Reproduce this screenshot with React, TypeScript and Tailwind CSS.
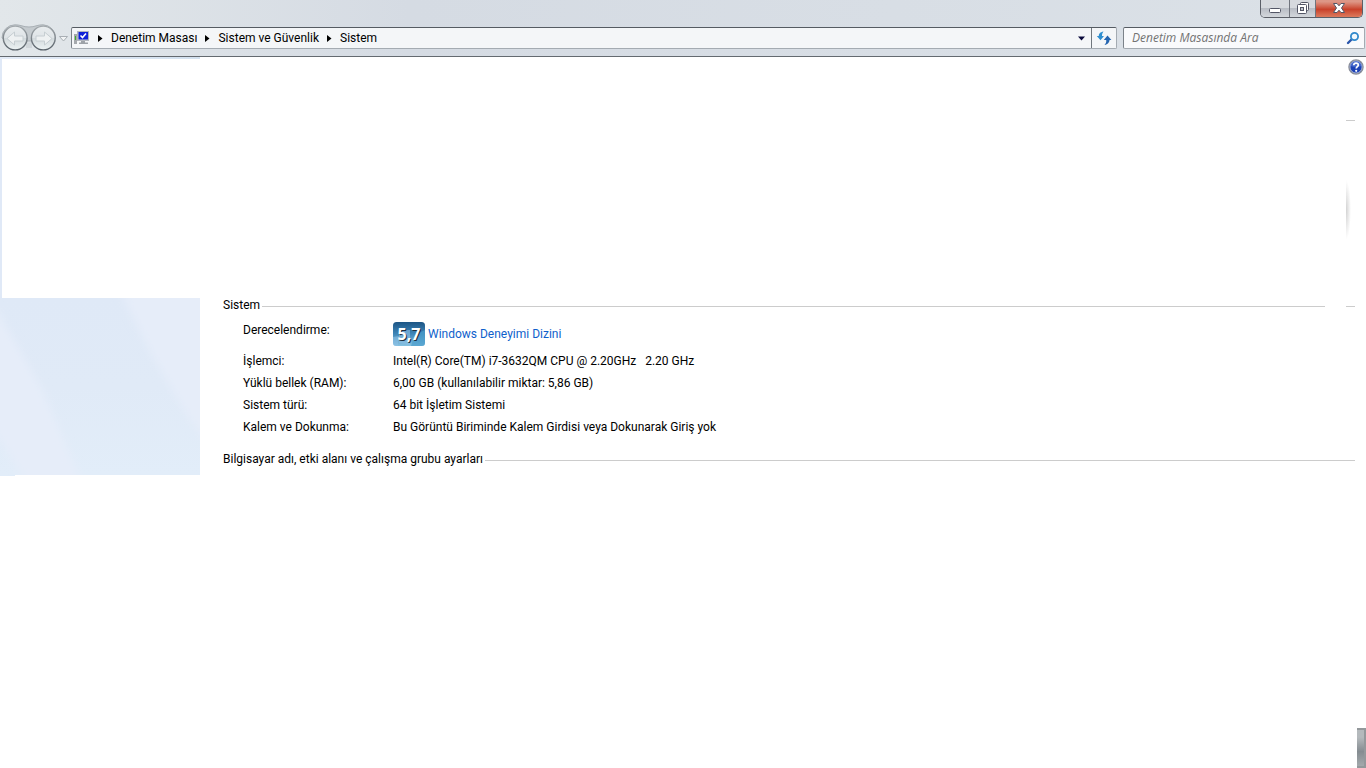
import type { ReactNode } from "react";

const crumbs = ["Denetim Masası", "Sistem ve Güvenlik", "Sistem"];

const specs = [
  { label: "İşlemci:", value: "Intel(R) Core(TM) i7-3632QM CPU @ 2.20GHz   2.20 GHz" },
  { label: "Yüklü bellek (RAM):", value: "6,00 GB (kullanılabilir miktar: 5,86 GB)" },
  { label: "Sistem türü:", value: "64 bit İşletim Sistemi" },
  {
    label: "Kalem ve Dokunma:",
    value: "Bu Görüntü Biriminde Kalem Girdisi veya Dokunarak Giriş yok",
  },
];

function NavButtons() {
  return (
    <div className="relative flex h-7 w-[70px] shrink-0 items-center">
      <svg className="absolute inset-0" width="70" height="28" viewBox="0 0 70 28" aria-hidden="true">
        <defs>
          <linearGradient id="nav-ball" x1="0" y1="0" x2="0" y2="1">
            <stop offset="0" stopColor="#e9edef" />
            <stop offset="0.48" stopColor="#dfe4e7" />
            <stop offset="0.52" stopColor="#d3dadd" />
            <stop offset="1" stopColor="#edf3f4" />
          </linearGradient>
          <linearGradient id="nav-rim" x1="0" y1="0" x2="0" y2="1">
            <stop offset="0" stopColor="#a3a9ad" />
            <stop offset="1" stopColor="#59626a" />
          </linearGradient>
        </defs>
        <path
          d="M15 .8C21 .8 23 3 29 3S37 .8 43 .8A13 13 0 0 1 55.500 14C50 18 35 17 29 17S8 18 2 14A13 13 0 0 1 15 .8Z"
          fill="#c5cbcf"
          stroke="#a9b0b5"
        />
        <path d="M26 17Q29 20 32 17V24H26Z" fill="#d0d6da" />
        <circle cx="15.2" cy="14" r="11.9" fill="url(#nav-ball)" stroke="url(#nav-rim)" strokeWidth="1.4" />
        <circle cx="43.3" cy="14" r="11.9" fill="url(#nav-ball)" stroke="url(#nav-rim)" strokeWidth="1.4" />
        <path d="M7 14.500L14.500 8V12H23V17H14.500V21Z" fill="#eef1f2" stroke="#c6ced2" />
        <path d="M52 14.500L44.500 8V12H36V17H44.500V21Z" fill="#eef1f2" stroke="#c6ced2" />
        <path d="M59.500 12.500H67.500L63.500 17Z" fill="#f2f4f5" stroke="#a9afb4" />
      </svg>
      <button type="button" aria-label="Geri" className="relative ml-0.5 size-7 rounded-full" />
      <button type="button" aria-label="İleri" className="relative size-7 rounded-full" />
      <button type="button" aria-label="Son sayfalar" className="relative h-7 w-3" />
    </div>
  );
}

function ComputerIcon() {
  return (
    <svg width="18" height="16" viewBox="0 0 18 16" aria-hidden="true">
      <rect x="1" y="4" width="3" height="10" fill="#a5a9ad" />
      <rect x="2" y="6" width="1" height="4" fill="#3fae2c" />
      <rect x="4.500" y="1.500" width="11" height="9" fill="#c9ccd2" stroke="#b3b7be" />
      <rect x="5.500" y="2" width="9.500" height="7.500" fill="#1022d8" />
      <path d="M7.500 5.500L9.500 7.500L13 3.500" fill="none" stroke="#fff" strokeWidth="1.6" />
      <path d="M8 11H12V12.500H15V14H6V12.500H8Z" fill="#9da2a8" />
    </svg>
  );
}

function WindowButtons() {
  return (
    <div className="mr-[3px] flex h-[18px] w-[103px] overflow-hidden rounded-b-[5px] border border-t-0 border-[#5b5f68]">
      <button
        type="button"
        aria-label="Simge durumuna küçült"
        className="flex flex-1 justify-center border-r border-[#70747d] bg-linear-to-b from-[#d6d9de] from-50% via-[#b9bdc5] via-50% to-[#d3d7dc]"
      >
        <svg width="14" height="16" viewBox="0 0 14 16" aria-hidden="true">
          <rect x="1.500" y="8.500" width="11" height="4" rx="1" fill="#fff" stroke="#535666" />
        </svg>
      </button>
      <button
        type="button"
        aria-label="Önceki boyut"
        className="flex w-[26px] justify-center border-r border-[#70747d] bg-linear-to-b from-[#d6d9de] from-50% via-[#b9bdc5] via-50% to-[#d3d7dc]"
      >
        <svg width="14" height="16" viewBox="0 0 14 16" aria-hidden="true">
          <rect x="4.500" y="2.500" width="8" height="8" rx="1" fill="#fff" stroke="#535666" />
          <rect x="1.500" y="4.500" width="9" height="9" rx="1" fill="#fff" stroke="#535666" />
          <rect x="4.500" y="7.500" width="3" height="3" fill="#c2c6cd" stroke="#535666" />
        </svg>
      </button>
      <button
        type="button"
        aria-label="Kapat"
        className="flex w-[46px] justify-center bg-linear-to-b from-[#dd9686] from-10% via-[#c8402a] via-55% to-[#dd7a5d]"
      >
        <svg width="14" height="16" viewBox="0 0 14 16" aria-hidden="true">
          <path
            d="M1.500 3.500H5L7 5.800L9 3.500H12.500L9.500 8L12.500 12.500H9L7 10.200L5 12.500H1.500L4.500 8Z"
            fill="#fff"
            stroke="#535666"
          />
        </svg>
      </button>
    </div>
  );
}

function AddressBar() {
  return (
    <div className="flex h-[22px] flex-1 rounded-[2px] border border-[#a4abb2] border-t-[#555b62] border-l-[#7b8289] bg-[#f4f6f8]">
      <nav aria-label="Adres" className="flex flex-1 items-center pl-px">
        <ComputerIcon />
        <ol className="ml-[3px] flex items-center">
          {crumbs.map((crumb) => (
            <li key={crumb} className="flex items-center">
              <svg width="15" height="9" viewBox="0 0 15 9" className="mr-0.5" aria-hidden="true">
                <path d="M4 1L8.500 4.500L4 8Z" fill="#000" />
              </svg>
              <a href="#" className="mr-1">
                {crumb}
              </a>
            </li>
          ))}
        </ol>
      </nav>
      <button type="button" aria-label="Önceki konumlar" className="flex w-5 items-center justify-center">
        <svg width="9" height="5" viewBox="0 0 9 5" aria-hidden="true">
          <path d="M1 0.500H8L4.500 4.500Z" fill="#0a0a3c" />
        </svg>
      </button>
      <button
        type="button"
        aria-label="Yenile"
        className="flex w-[25px] items-center justify-center border-l border-[#70777e]"
      >
        <svg width="16" height="16" viewBox="0 0 16 16" aria-hidden="true">
          <path d="M7.500 1.500C4 2 2.800 4 2.800 6H0.800L4.500 10.300L8 6H6C5.900 4.500 6.300 3 7.500 1.500Z" fill="#2f8fd0" />
          <path d="M8.500 15C12 14.500 13.500 12 13.500 10H15.400L11.500 5.500L7.800 10H10.200C10.400 12 10 13.500 8.500 15Z" fill="#2565b0" />
        </svg>
      </button>
    </div>
  );
}

function SearchBox() {
  return (
    <div className="flex h-[22px] w-[242px] items-center rounded-[2px] border border-[#a4abb2] border-t-[#555b62] border-l-[#7b8289] bg-[#f9fafc] pr-1 pl-2">
      <input
        type="search"
        aria-label="Denetim Masasında Ara"
        placeholder="Denetim Masasında Ara"
        className="min-w-0 flex-1 bg-transparent font-['Open_Sans',sans-serif] outline-none placeholder:text-[#737373] placeholder:italic"
      />
      <button type="button" aria-label="Ara">
        <svg width="14" height="14" viewBox="0 0 14 14" aria-hidden="true">
          <path d="M2 12L6 8" stroke="#2a55ab" strokeWidth="2.4" strokeLinecap="round" />
          <circle cx="8.500" cy="5.500" r="3.600" fill="#f2f8fd" stroke="#3089cc" strokeWidth="1.8" />
        </svg>
      </button>
    </div>
  );
}

function SidePanel() {
  return (
    <svg
      className="block h-[177px] w-full"
      viewBox="0 0 200 177"
      preserveAspectRatio="none"
      aria-hidden="true"
    >
      <defs>
        <linearGradient id="panel" x1="0" y1="0" x2="0" y2="1">
          <stop offset="0" stopColor="#dfe9f7" />
          <stop offset="0.5" stopColor="#e0eaf7" />
          <stop offset="1" stopColor="#e2edf9" />
        </linearGradient>
        <filter id="soft">
          <feGaussianBlur stdDeviation="4" />
        </filter>
      </defs>
      <rect width="200" height="177" fill="url(#panel)" />
      <g fill="#e6edf9" filter="url(#soft)">
        <path d="M-20 -10L0 18L44 95L84 190H30L0 142L-20 112Z" />
        <path d="M118 -12H220V160L190 122L150 54Z" />
      </g>
    </svg>
  );
}

function SectionHeading({ children }: { children: ReactNode }) {
  return (
    <div className="flex items-center">
      <h2>{children}</h2>
      <div className="mt-0.5 ml-0.5 h-px flex-1 bg-[#cccccc]" />
    </div>
  );
}

function ScoreBadge() {
  return (
    <svg width="32" height="24" viewBox="0 0 32 24" aria-hidden="true">
      <defs>
        <linearGradient id="score" x1="0" y1="0" x2="0" y2="1">
          <stop offset="0" stopColor="#1c5585" />
          <stop offset="0.5" stopColor="#3f86b8" />
          <stop offset="1" stopColor="#86c3e2" />
        </linearGradient>
      </defs>
      <rect width="32" height="24" rx="3.500" fill="url(#score)" />
      <path d="M0 15L6 14L5 24H3Q0 24 0 21ZM6 8H17V23L6 21Z" fill="#8dbfe4" opacity="0.600" />
      <path d="M18 24Q21 12 32 8V21Q32 24 29 24Z" fill="#4a9ccc" opacity="0.700" />
      <g fontFamily="'Open Sans', sans-serif" fontSize="16" fontWeight="700" textAnchor="middle">
        <text x="17" y="19" fill="#1d2d3c" aria-hidden="true">
          5,7
        </text>
        <text x="16" y="18" fill="#fff">
          5,7
        </text>
      </g>
    </svg>
  );
}

function RightEdge() {
  return (
    <aside className="flex w-5 flex-col">
      <button type="button" aria-label="Yardım" className="mt-0.5 ml-0.5 size-4">
        <svg width="16" height="16" viewBox="0 0 16 16" aria-hidden="true">
          <circle cx="8" cy="8" r="7" fill="#1c41b5" stroke="#8b8f99" strokeWidth="1.500" />
          <circle cx="8" cy="8" r="6" fill="none" stroke="#c9d0e4" strokeWidth="0.700" />
          <path d="M2.500 7A5.500 5 0 0 1 13.500 7Q8 9 2.500 7Z" fill="#6a8be0" opacity="0.500" />
          <path
            d="M5.800 6.200C5.800 3.300 10.300 3.500 10.300 6C10.300 7.600 8.200 7.700 8.200 9.500"
            fill="none"
            stroke="#fff"
            strokeWidth="1.700"
          />
          <circle cx="8.200" cy="11.800" r="1.100" fill="#fff" />
        </svg>
      </button>
      <div className="mt-[45px] h-px w-[9px] bg-[#cccccc]" />
      <div className="mt-[59px] h-[60px] w-[5px] bg-[radial-gradient(ellipse_at_left,#d2d2d2,#ffffff_70%)]" />
      <div className="mt-[66px] h-px w-[9px] bg-[#cccccc]" />
      <div className="mt-[153px] h-px w-[9px] bg-[#cccccc]" />
      <div className="mt-auto ml-[11px] h-10 border-2 border-l-0 border-[#93989b] bg-linear-to-b from-[#b4b9bc] from-20% via-[#858c91] via-60% to-[#a4a9ac]" />
    </aside>
  );
}

export default function App() {
  return (
    <div className="flex min-h-screen flex-col bg-white font-[Roboto,'Noto_Sans',sans-serif] text-xs leading-4 text-black">
      <header className="border-b border-[#646a70] bg-linear-to-r from-[#e2e7ea] via-[#d5dbe3] via-30% to-[#dbe1e7]">
        <div className="flex justify-end">
          <WindowButtons />
        </div>
        <div className="flex items-center pt-1.5 pr-px pb-1">
          <NavButtons />
          <div className="ml-px flex flex-1 gap-1.5">
            <AddressBar />
            <SearchBox />
          </div>
        </div>
      </header>

      <div className="flex flex-1">
        <div className="w-[200px]">
          <div className="h-0.5 bg-linear-to-r from-[#e4ecf8] to-[#d3e1ef]" />
          <div className="h-[239px] border-l-2 border-[#e0e9f7]" />
          <SidePanel />
          <div className="h-px w-[15px] bg-[#e2edf9]" />
        </div>

        <main className="flex-1 pt-60 pl-[23px]">
          <section className="pr-[21px]">
            <SectionHeading>Sistem</SectionHeading>
            <dl className="mt-2 grid grid-cols-[150px_1fr] pl-5">
              <dt className="h-[29px] pt-px">Derecelendirme:</dt>
              <dd className="flex h-[26px] items-center gap-[3px]">
                <ScoreBadge />
                <a href="#" className="text-[#0f5fcb]">
                  Windows Deneyimi Dizini
                </a>
              </dd>
              {specs.map((spec) => (
                <div key={spec.label} className="col-span-2 grid h-[22px] grid-cols-subgrid items-center">
                  <dt>{spec.label}</dt>
                  <dd className="whitespace-pre">{spec.value}</dd>
                </div>
              ))}
            </dl>
          </section>
          <section className="mt-[13px]">
            <SectionHeading>Bilgisayar adı, etki alanı ve çalışma grubu ayarları</SectionHeading>
          </section>
        </main>

        <RightEdge />
      </div>
    </div>
  );
}
